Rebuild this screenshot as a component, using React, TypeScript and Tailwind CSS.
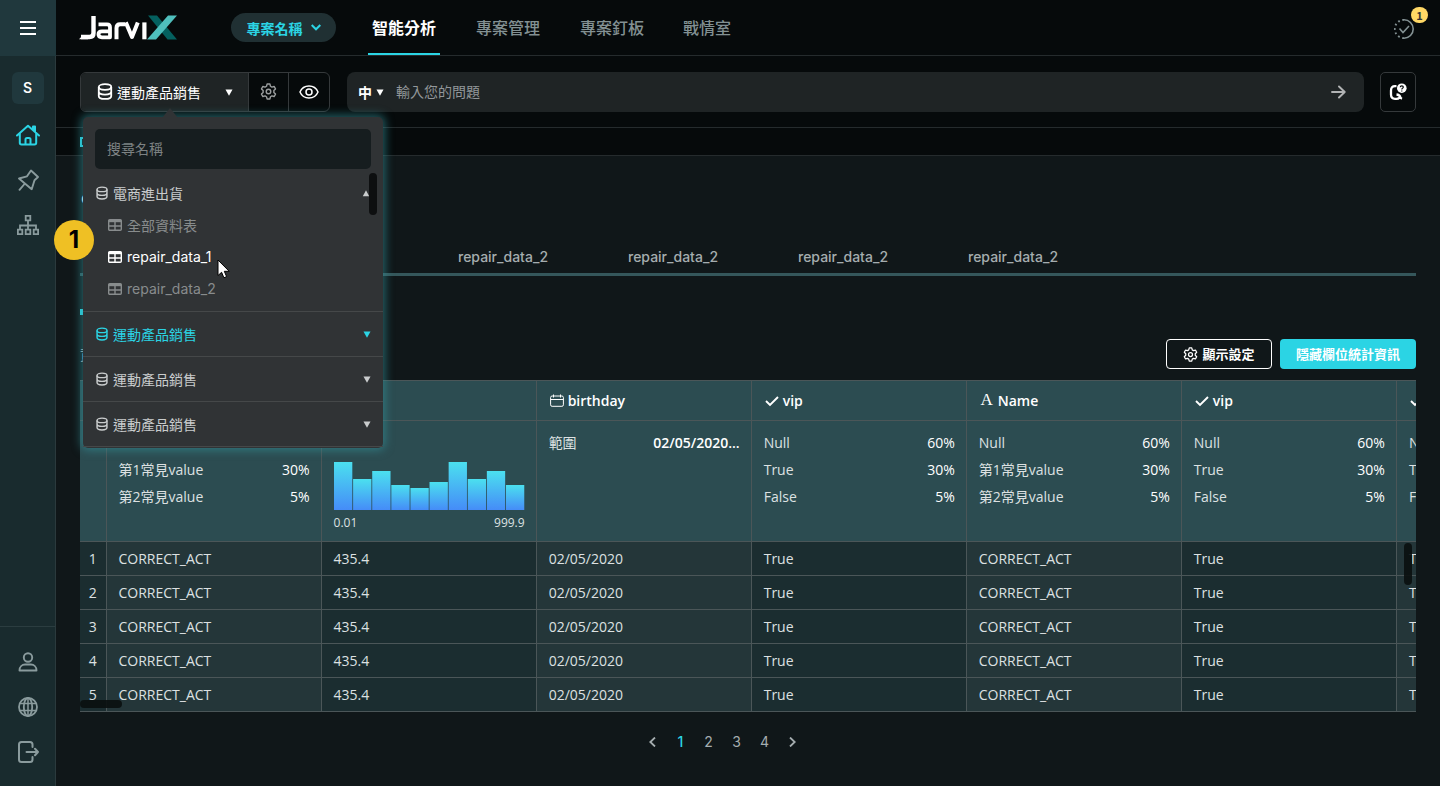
import React from "react";

type IconProps = { className?: string };
type Stat = [string, string];
type Kind = "text" | "date" | "check";
type Column = {
  id: string;
  name: string;
  kind: Kind;
  cell: string;
  stats?: Stat[];
  chart?: boolean;
  strong?: boolean;
};

const textStats: Stat[] = [["Null", "60%"], ["第1常見value", "30%"], ["第2常見value", "5%"]];
const boolStats: Stat[] = [["Null", "60%"], ["True", "30%"], ["False", "5%"]];

const columns: Column[] = [
  { id: "c1", name: "Name", kind: "text", cell: "CORRECT_ACT", stats: textStats },
  { id: "c2", name: "Age", kind: "text", cell: "435.4", chart: true },
  { id: "c3", name: "birthday", kind: "date", cell: "02/05/2020", stats: [["範圍", "02/05/2020..."]], strong: true },
  { id: "c4", name: "vip", kind: "check", cell: "True", stats: boolStats },
  { id: "c5", name: "Name", kind: "text", cell: "CORRECT_ACT", stats: textStats },
  { id: "c6", name: "vip", kind: "check", cell: "True", stats: boolStats },
  { id: "c7", name: "vip", kind: "check", cell: "True", stats: boolStats },
];

const sources = [
  { id: "s1", name: "運動產品銷售", active: true },
  { id: "s2", name: "運動產品銷售", active: false },
  { id: "s3", name: "運動產品銷售", active: false },
];

const bars = [48, 31, 39, 25, 22, 28, 48, 31, 39, 25];

function Database({ className }: IconProps) {
  return (
    <svg viewBox="0 0 16 18" className={className} fill="none" stroke="currentColor" strokeWidth="1.9" aria-hidden="true">
      <ellipse cx="8" cy="4.2" rx="6.6" ry="3" />
      <path d="M1.4 4.200v9.500c0 1.800 2.900 3.200 6.600 3.200s6.600-1.400 6.600-3.200V4.200M1.400 9c0 1.800 2.900 3.200 6.600 3.200s6.600-1.400 6.600-3.200" />
    </svg>
  );
}

function TableGlyph({ className }: IconProps) {
  return (
    <svg viewBox="0 0 14 12" className={className} fill="none" stroke="currentColor" strokeWidth="1.4" aria-hidden="true">
      <rect x=".7" y=".7" width="12.6" height="10.6" rx="1" />
      <path d="M.7 2h12.6" strokeWidth="2.4" />
      <path d="M1 7h12M7 3v8" />
    </svg>
  );
}

function Gear({ className }: IconProps) {
  return (
    <svg viewBox="0 0 24 24" className={className} fill="none" stroke="currentColor" strokeWidth="2" strokeLinejoin="round" aria-hidden="true">
      <path d="M9.200 4.600 10 1.500h4l.8 3.100 2 1.200 3.100-.9 2 3.500L19.600 10.700v2.600l2.300 2.300-2 3.500-3.100-.9-2 1.200-.8 3.100h-4l-.8-3.100-2-1.200-3.100.9-2-3.500 2.300-2.300v-2.600L2.100 8.400l2-3.500 3.100.9z" />
      <circle cx="12" cy="12" r="3.200" />
    </svg>
  );
}

function Eye() {
  return (
    <svg viewBox="0 0 20 16" className="h-4 w-5" fill="none" stroke="currentColor" strokeWidth="1.5" aria-hidden="true">
      <path d="M1 8c1.700-4 5-6 9-6s7.300 2 9 6c-1.700 4-5 6-9 6S2.700 12 1 8z" />
      <circle cx="10" cy="8" r="3" />
    </svg>
  );
}

function Triangle({ up = false, className }: IconProps & { up?: boolean }) {
  return (
    <svg viewBox="0 0 8 7" className={`mt-0.5 h-[7px] w-2 shrink-0 ${className ?? ""}`} fill="currentColor" aria-hidden="true">
      <path d={up ? "M4 .2 7.200 6.200H.8z" : "M.5.500h7L4 6.800z"} />
    </svg>
  );
}

function Logo() {
  return (
    <svg viewBox="0 0 98 26" className="h-[26px] w-[98px]" fill="none" role="img" aria-label="JarviX">
      <g stroke="#fff" strokeWidth="4.400" strokeLinejoin="round">
        <path d="M14.500 1v17q0 4-4 4H2" />
        <path d="M19.500 9.300h8.500q3 0 3 3V22.300h-8q-3.500 0-3.500-3t3.500-3h8" strokeWidth="3.800" />
        <path d="M37.500 24.300V13q0-3.700 3.700-3.700H46" strokeWidth="4" />
        <path d="M46.800 7.400 53 22l5.800-14.600" strokeWidth="4" />
        <path d="M65.400 7.400v16.900" strokeWidth="4.200" />
      </g>
      <path d="M0 24.300 4 20h5v4.300z" fill="#fff" />
      <path d="M69 .5h9L98 24.500H88.500z" fill="#04605f" />
      <path d="M89 .5H98L77 24.500h-9z" fill="#4fbfbd" />
    </svg>
  );
}

function HomeIcon() {
  return (
    <svg viewBox="0 0 24 22" className="h-[22px] w-6" fill="none" stroke="currentColor" strokeWidth="2" strokeLinecap="round" strokeLinejoin="round" aria-hidden="true">
      <path d="M1 11.500 12 1.800l11 9.700M3.800 9.500v9.300q0 1.700 1.700 1.700h13q1.700 0 1.700-1.700V9.500M17 5.800V2.500h2V8M9.500 20v-4.500q0-1.500 1.500-1.500h2q1.500 0 1.500 1.500V20" />
    </svg>
  );
}

function PinIcon() {
  return (
    <svg viewBox="0 0 22 22" className="h-[22px] w-[22px]" fill="none" stroke="currentColor" strokeWidth="1.900" strokeLinecap="round" strokeLinejoin="round" aria-hidden="true">
      <path d="M14 1.500 21 8l-3.500 3.200-2.800 9L2 9.500l8-2.200zM7.500 15 2.500 20.800" />
    </svg>
  );
}

function TreeIcon() {
  return (
    <svg viewBox="0 0 22 20" className="h-5 w-[22px]" fill="none" stroke="currentColor" strokeWidth="1.800" aria-hidden="true">
      <path d="M8.700.9h4.600v4.400H8.700zM.9 14.700h4.400v4.400H.9zM8.700 14.700h4.600v4.400H8.700zM16.700 14.700h4.400v4.400h-4.400zM11 5.400v9.200M3 14.600V10.500h16v4.100" />
    </svg>
  );
}

function UserIcon() {
  return (
    <svg viewBox="0 0 20 20" className="h-5 w-5" fill="none" stroke="currentColor" strokeWidth="1.900" strokeLinejoin="round" aria-hidden="true">
      <circle cx="10" cy="5.500" r="4.200" />
      <path d="M1.500 18.500c0-3.800 2.700-6 5.500-6h6c2.800 0 5.500 2.200 5.500 6z" />
    </svg>
  );
}

function GlobeIcon() {
  return (
    <svg viewBox="0 0 20 20" className="h-5 w-5" fill="none" stroke="currentColor" strokeWidth="1.800" aria-hidden="true">
      <circle cx="10" cy="10" r="9" />
      <ellipse cx="10" cy="10" rx="4.200" ry="9" />
      <path d="M2 6.500h16M2 13.500h16M10 1v18" strokeWidth="1.500" />
    </svg>
  );
}

function ExitIcon() {
  return (
    <svg viewBox="0 0 22 22" className="h-[22px] w-[22px]" fill="none" stroke="currentColor" strokeWidth="2" strokeLinecap="round" strokeLinejoin="round" aria-hidden="true">
      <path d="M15.500 6V3.500Q15.500 1 13 1H4.500Q2 1 2 3.500v15Q2 21 4.500 21H13q2.500 0 2.500-2.500V16M9.500 11H21M18 7.800 21 11l-3 3.200" />
    </svg>
  );
}

function KindIcon({ kind }: { kind: Kind }) {
  if (kind === "text") return <span className="w-3.5 text-center font-['Liberation_Serif',serif] text-[17px] font-normal">A</span>;
  if (kind === "date")
    return (
      <svg viewBox="0 0 14 13" className="h-[13px] w-3.5" fill="none" stroke="currentColor" aria-hidden="true">
        <rect x=".6" y="2" width="12.800" height="10.300" rx="1.500" />
        <path d="M.6 5.500h12.800M3.500.5v3M10.500.5v3" />
      </svg>
    );
  return (
    <svg viewBox="0 0 14 12" className="h-3 w-3.5" fill="none" stroke="currentColor" strokeWidth="1.900" aria-hidden="true">
      <path d="m1 6 4 4L13 2" />
    </svg>
  );
}

function Sidebar() {
  return (
    <aside className="flex w-14 shrink-0 flex-col border-r border-[#2b3a3d] bg-[#192b2e] text-[#8a9b9d]">
      <button aria-label="選單" className="flex h-14 w-14 items-center justify-center bg-[#20383d] text-white">
        <svg viewBox="0 0 16 14" className="h-3.5 w-4" stroke="currentColor" strokeWidth="2" aria-hidden="true">
          <path d="M0 1h16M0 7h16M0 13h16" />
        </svg>
      </button>
      <nav className="flex flex-1 flex-col items-center pt-4">
        <button className="h-8 w-8 rounded-md bg-[#20383d] font-['Inter',sans-serif] text-sm font-semibold text-white">S</button>
        <div className="mt-2 flex flex-col">
          <a href="#home" aria-label="首頁" className="flex h-[45px] w-14 items-center justify-center text-[#2bd4e4]"><HomeIcon /></a>
          <a href="#pins" aria-label="釘板" className="flex h-[45px] w-14 items-center justify-center"><PinIcon /></a>
          <a href="#tree" aria-label="架構" className="flex h-[45px] w-14 items-center justify-center"><TreeIcon /></a>
        </div>
      </nav>
      <nav className="flex flex-col border-t border-[#2b3d40] pt-3 pb-3">
        <a href="#user" aria-label="使用者" className="flex h-[45px] items-center justify-center"><UserIcon /></a>
        <a href="#lang" aria-label="語言" className="flex h-[45px] items-center justify-center"><GlobeIcon /></a>
        <a href="#logout" aria-label="登出" className="flex h-[45px] items-center justify-center"><ExitIcon /></a>
      </nav>
    </aside>
  );
}

function TopBar() {
  return (
    <header className="flex h-14 items-stretch border-b border-[#252b2d] bg-[#060a0b] pr-6 pl-[23px]">
      <div className="flex w-[152px] items-center"><Logo /></div>
      <div className="flex w-[137px] items-center">
        <button className="flex h-[29px] w-[105px] items-center justify-center gap-2 rounded-full bg-[#203033] text-sm font-bold text-[#2bd4e4]">
          專案名稱
          <svg viewBox="0 0 10 7" className="h-[7px] w-2.5" fill="none" stroke="currentColor" strokeWidth="2" aria-hidden="true"><path d="m.7 1 4.300 4.300L9.300 1" /></svg>
        </button>
      </div>
      <nav className="flex flex-1 items-stretch gap-8 text-base text-[#839193]">
        <a href="#analysis" className="flex w-[72px] items-center justify-center border-b-2 border-[#2bd4e4] font-bold text-white">智能分析</a>
        <a href="#manage" className="flex w-[72px] items-center justify-center pb-0.5 font-medium">專案管理</a>
        <a href="#board" className="flex w-[72px] items-center justify-center pb-0.5 font-medium">專案釘板</a>
        <a href="#war" className="flex w-[54px] items-center justify-center pb-0.5 font-medium">戰情室</a>
      </nav>
      <button aria-label="通知" className="relative flex w-6 items-center justify-center pt-0.5 text-[#839193]">
        <svg viewBox="0 0 20 20" className="h-5 w-5" fill="none" stroke="currentColor" strokeWidth="1.600" aria-hidden="true">
          <path d="M10 .8a9.200 9.200 0 0 1 0 18.400" />
          <path d="M10 19.200A9.200 9.200 0 0 1 10 .8" strokeDasharray="1.800 2.700" strokeWidth="1.900" />
          <path d="m5.500 9.500 3.500 4L15 7" />
        </svg>
        <span className="absolute top-[7px] left-[19px] flex h-4 w-[17px] items-center justify-center rounded-full bg-[#ffd866] text-[11px] font-semibold text-[#333]">1</span>
      </button>
    </header>
  );
}

function SourceMenu() {
  return (
    <div className="absolute top-11 left-0.5 z-20 w-[300px] rounded-[5px] bg-[#303335] pt-3 pb-px text-sm text-[#c9cccd] shadow-[0_0_10px_2px_rgba(52,150,158,0.6)]">
      <svg viewBox="0 0 16 10" className="absolute -top-[9px] left-[79px] h-2.5 w-4" fill="#303335" aria-hidden="true"><path d="M8 0l8 10H0z" /></svg>
      <input aria-label="搜尋名稱" placeholder="搜尋名稱" className="mx-3 block h-10 w-[276px] rounded-[5px] bg-[#161d1f] px-3 pb-0.5 outline-none placeholder:text-[#7d8283]" />
      <div className="absolute top-14 right-1.5 h-[42px] w-2 rounded-full bg-[#0d0f10]" />
      <div className="border-b border-[#454849] pt-2 pb-1.5">
        <button className="flex h-8 w-full items-center gap-[5px] px-[13px]"><Database className="h-3.5 w-3" />電商進出貨<Triangle up className="ml-auto" /></button>
        <button className="flex h-8 w-full items-center gap-[5px] px-[25px] text-[#888c8d]"><TableGlyph className="h-3 w-3.5" />全部資料表</button>
        <button className="flex h-8 w-full items-center gap-[5px] px-[25px] font-['Inter','Noto_Sans_CJK_TC',sans-serif] text-white"><TableGlyph className="h-3 w-3.5" />repair_data_1</button>
        <button className="flex h-8 w-full items-center gap-[5px] px-[25px] font-['Inter','Noto_Sans_CJK_TC',sans-serif] text-[#888c8d]"><TableGlyph className="h-3 w-3.5" />repair_data_2</button>
      </div>
      {sources.map((s) => (
        <button key={s.id} className={`flex h-[45px] w-full items-center gap-[5px] border-b border-[#454849] pr-3 pl-[13px] ${s.active ? "text-[#2bd4e4]" : ""}`}>
          <Database className="h-3.5 w-3" />{s.name}<Triangle className="ml-auto" />
        </button>
      ))}
      <svg viewBox="0 0 13 20" className="absolute top-[142px] left-[134px] h-5 w-[13px]" aria-hidden="true">
        <path d="M1 1v15.500l3.600-3.200 2.300 5.500 2.700-1.200-2.300-5.300h4.900z" fill="#fff" stroke="#000" />
      </svg>
      <span className="absolute top-[103px] -left-[29px] flex h-10 w-10 items-center justify-center rounded-full bg-[#efc024] font-['Inter',sans-serif] text-2xl font-bold text-black">1</span>
    </div>
  );
}

function QueryBar() {
  return (
    <section className="flex h-[72px] items-center border-b border-[#252b2d] bg-[#060a0b] px-6 text-sm">
      <div className="relative flex h-10 w-[250px] shrink-0 rounded-md border border-[#35393b] text-white">
        <button className="flex w-[167px] items-center rounded-l-[5px] bg-[#1f2425] pr-[15px] pl-4"><Database className="mr-1 h-[17px] w-4" />運動產品銷售<Triangle className="ml-auto" /></button>
        <button aria-label="設定" className="flex w-10 items-center justify-center border-l border-[#35393b] text-[#9a9d9e]"><Gear className="h-[17px] w-[17px]" /></button>
        <button aria-label="檢視" className="flex w-[41px] items-center justify-center border-l border-[#35393b]"><Eye /></button>
        <SourceMenu />
      </div>
      <div className="ml-[17px] flex h-10 flex-1 items-center rounded-lg bg-[#1f2425] px-[11px] text-white">
        <button className="flex items-center gap-1 font-bold">中<Triangle /></button>
        <input aria-label="問題" placeholder="輸入您的問題" className="ml-3 h-10 min-w-0 flex-1 bg-transparent pb-0.5 outline-none placeholder:text-[#92979a]" />
        <button aria-label="送出" className="flex w-[30px] items-center justify-center text-[#b1b3b4]">
          <svg viewBox="0 0 15 14" className="h-3.5 w-[15px]" fill="none" stroke="currentColor" strokeWidth="1.900" strokeLinecap="round" strokeLinejoin="round" aria-hidden="true"><path d="M1 7h12.500M8 1.500 13.700 7 8 12.500" /></svg>
        </button>
      </div>
      <button aria-label="提問說明" className="ml-4 flex h-10 w-9 items-center justify-center rounded-[5px] border border-[#35393b] text-white">
        <svg viewBox="0 0 18 18" className="h-[18px] w-[18px]" fill="none" aria-hidden="true">
          <path d="M7.500 3.200H6Q2 3.200 2 7.500v4Q2 15.800 6 15.800h1.500q3.500 0 3.500-3M7.500 11.500q3 .3 3.500 2t2 2.300" stroke="currentColor" strokeWidth="2.300" />
          <circle cx="12.800" cy="5.200" r="4.800" fill="currentColor" />
          <path d="M11.200 4.200q.1-1.400 1.600-1.400t1.500 1.300q0 .8-.8 1.200-.7.400-.7 1.200M12.800 7.400v1.200" stroke="#060a0b" strokeWidth="1.200" />
        </svg>
      </button>
    </section>
  );
}

function Histogram() {
  return (
    <div>
      <svg viewBox="0 0 192 48" className="h-12 w-full" preserveAspectRatio="none" role="img" aria-label="0.01 – 999.9">
        <defs>
          <linearGradient id="bar" x1="0" y1="0" x2="0" y2="1"><stop stopColor="#4be0ef" /><stop offset="1" stopColor="#458cf8" /></linearGradient>
        </defs>
        {bars.map((h, i) => <rect key={i} x={i * 19.2} y={48 - h} width="18.4" height={h} fill="url(#bar)" />)}
      </svg>
      <div className="mt-1 flex justify-between text-xs leading-[18px]"><span>0.01</span><span>999.9</span></div>
    </div>
  );
}

function DataTable() {
  return (
    <div className="relative overflow-hidden font-['Open_Sans','Noto_Sans_CJK_TC',sans-serif]">
      <table className="w-[1532px] table-fixed border-collapse text-sm text-[#dde1e2]">
        <colgroup>
          <col className="w-[26px]" />
          {columns.map((c) => <col key={c.id} className="w-[215px]" />)}
        </colgroup>
        <thead className="bg-[#2c4c51]">
          <tr className="h-10">
            <th className="border-y border-[#4b5658]" />
            {columns.map((c) => (
              <th key={c.id} scope="col" className="border border-[#4b5658] px-[13px] py-0 text-left font-semibold text-white">
                <span className="flex items-center gap-1"><KindIcon kind={c.kind} />{c.name}</span>
              </th>
            ))}
          </tr>
          <tr className="h-[121px]">
            <td className="border-y border-[#4b5658]" />
            {columns.map((c) => (
              <td key={c.id} className={`border border-[#4b5658] pr-[11px] pl-3 align-top ${c.chart ? "pt-[41px]" : "pt-2"}`}>
                {c.chart ? <Histogram /> : c.stats?.map(([label, value]) => (
                  <div key={label} className="flex h-[27px] items-center justify-between">
                    <span>{label}</span>
                    <span className={c.strong ? "font-semibold text-white" : "text-white"}>{value}</span>
                  </div>
                ))}
              </td>
            ))}
          </tr>
        </thead>
        <tbody>
          {[1, 2, 3, 4, 5].map((n) => (
            <tr key={n} className="h-[34px]">
              <th scope="row" className="border-y border-[#4b5658] bg-[#1b2d30] p-0 text-center font-normal">{n}</th>
              {columns.map((c, i) => (
                <td key={c.id} className={`border border-[#4b5658] py-0 pr-[11px] pl-3 ${i % 2 ? "bg-[#1b2d30]" : "bg-[#243639]"}`}>{c.cell}</td>
              ))}
            </tr>
          ))}
        </tbody>
      </table>
      <div className="absolute right-1 bottom-[127px] h-[42px] w-2 rounded-full bg-[#0a0f10]/90" />
      <div className="absolute bottom-1 left-0 h-2 w-[42px] rounded-full bg-[#0a0f10]/90" />
    </div>
  );
}

export default function App() {
  return (
    <div className="flex min-h-screen bg-[#101719] font-['Noto_Sans_CJK_TC',sans-serif]">
      <Sidebar />
      <div className="flex min-w-0 flex-1 flex-col">
        <TopBar />
        <QueryBar />
        <div className="flex h-7 items-center border-b border-[#252b2d] bg-[#060a0b] px-6"><span className="h-2.5 w-2.5 border-2 border-[#2bd4e4]" /></div>
        <main className="flex flex-col px-6">
          <h1 className="h-[82px] pt-6 pl-px text-lg leading-8 text-white">data</h1>
          <div role="tablist" className="flex h-[38px] border-b-[3px] border-[#35575b] pl-[338px] font-['Inter',sans-serif] text-sm font-medium text-[#a5adaf]">
            {[1, 2, 3, 4].map((n) => <button key={n} role="tab" className="flex w-[170px] items-center justify-center pt-0.5">repair_data_2</button>)}
          </div>
          <div className="mt-[33px] h-1.5 w-20 bg-[#2bd4e4]" />
          <div className="mt-6 flex h-[30px] items-center gap-2 text-xs font-bold text-white">
            <h2 className="flex-1 text-sm font-normal text-[#b9c2c4]">資料預覽</h2>
            <button className="flex h-[30px] w-[106px] items-center justify-center gap-1 rounded border border-white text-[13px]"><Gear className="h-[15px] w-[15px]" />顯示設定</button>
            <button className="h-[30px] w-[136px] rounded bg-[#2bd4e4] text-[13px]">隱藏欄位統計資訊</button>
          </div>
          <div className="mt-[11px]"><DataTable /></div>
          <nav aria-label="分頁" className="mt-[18px] mr-[51px] flex h-6 items-center justify-center font-['Inter',sans-serif] text-sm text-[#a5adaf]">
            <button aria-label="上一頁" className="flex w-7 justify-center"><svg viewBox="0 0 7 10" className="h-2.5 w-[7px]" fill="none" stroke="currentColor" strokeWidth="1.800" aria-hidden="true"><path d="M6 .5 1.300 5 6 9.500" /></svg></button>
            <button aria-current="page" className="w-7 font-medium text-[#2bd4e4]">1</button>
            <button className="w-7">2</button>
            <button className="w-7">3</button>
            <button className="w-7">4</button>
            <button aria-label="下一頁" className="flex w-7 justify-center"><svg viewBox="0 0 7 10" className="h-2.5 w-[7px]" fill="none" stroke="currentColor" strokeWidth="1.800" aria-hidden="true"><path d="M1 .5 5.700 5 1 9.500" /></svg></button>
          </nav>
        </main>
      </div>
    </div>
  );
}
